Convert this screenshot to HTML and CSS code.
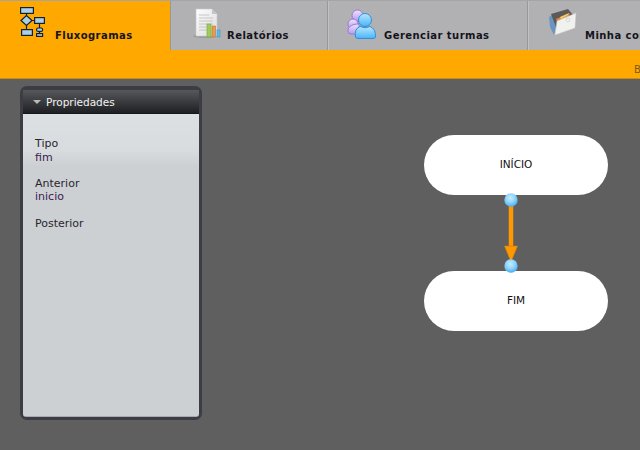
FILE: index.html
```html
<!DOCTYPE html>
<html lang="en">
<head>
  <meta charset="UTF-8">
  <title>Fluxogramas</title>
  <link rel="stylesheet" href="styles.css">
</head>
<body>
  <!-- Top menu -->
  <div class="tabs">
    <div class="tab active tab-flow">
      <svg class="icon" width="46" height="40" viewBox="0 0 46 40">
        <g stroke="#14202c" stroke-width="1.2" fill="#a9d0e6">
          <path d="M26.500 13V16M26.500 25V29M31 20.500H35M39.500 23V28M39.500 31V33" fill="none"/>
          <rect x="20.600" y="7.600" width="12.800" height="5.800"/>
          <path d="M21 20.500L26.500 15.500L32 20.500L26.500 25.500Z"/>
          <rect x="34.600" y="17.600" width="9.800" height="5.800"/>
          <rect x="21.600" y="29.600" width="10.800" height="5.800"/>
          <rect x="36.600" y="28" width="6" height="3.400" rx="1.500"/>
          <rect x="36.600" y="33.600" width="6" height="2.800"/>
        </g>
      </svg>
      <span class="tab-label">Fluxogramas</span>
    </div>
    <div class="tab tab-report">
      <svg class="icon" width="30" height="32" viewBox="0 0 30 32">
        <defs>
          <linearGradient id="sheet" x1="0" y1="0" x2="1" y2="1">
            <stop offset="0" stop-color="#fdfdfd"/>
            <stop offset="1" stop-color="#dcdcdc"/>
          </linearGradient>
        </defs>
        <ellipse cx="12" cy="28" rx="12" ry="2" fill="#8d8d8d" opacity=".6"/>
        <path d="M3 1H19L24 6V28H3Z" fill="url(#sheet)" stroke="#c9c9c9" stroke-width=".6"/>
        <path d="M19 1V6H24Z" fill="#c4c4c4"/>
        <path d="M6 7H16M6 10H20M6 13H20M6 16H20M6 19H15M6 22H15" stroke="#c6c6c6"/>
        <rect x="14" y="16" width="4" height="13" fill="#9fcf52" stroke="#7ea23e" stroke-width=".6"/>
        <rect x="19" y="18" width="3.600" height="11" fill="#e39b56" stroke="#b97b3f" stroke-width=".6"/>
        <rect x="24" y="22" width="3" height="7" fill="#5cbcee" stroke="#3f94c4" stroke-width=".6"/>
      </svg>
      <span class="tab-label">Relatórios</span>
    </div>
    <div class="tab tab-group">
      <svg class="icon" width="30" height="30" viewBox="0 0 30 30">
        <defs>
          <linearGradient id="violet" x1="0" y1="0" x2="0" y2="1">
            <stop offset="0" stop-color="#efe4fb"/>
            <stop offset="1" stop-color="#b79bec"/>
          </linearGradient>
          <linearGradient id="blue" x1="0" y1="0" x2="0" y2="1">
            <stop offset="0" stop-color="#b8e8ff"/>
            <stop offset="1" stop-color="#4ab4f6"/>
          </linearGradient>
        </defs>
        <g fill="url(#violet)" stroke="#9a78d8">
          <circle cx="10.500" cy="6.500" r="5.500"/>
          <circle cx="6" cy="15" r="5"/>
          <path d="M1 22C1 17 6 15 12 15V25H4Q1 25 1 22Z"/>
        </g>
        <g fill="url(#blue)" stroke="#2f8fdc">
          <circle cx="18" cy="11" r="6.500"/>
          <path d="M8.500 28Q7 20 13 17.500Q18 20 23 17.500Q29 20 28.500 28Q28 29.500 26 29.500H11Q9 29.500 8.500 28Z"/>
        </g>
      </svg>
      <span class="tab-label">Gerenciar turmas</span>
    </div>
    <div class="tab tab-folder">
      <svg class="icon" width="30" height="30" viewBox="0 0 30 30">
        <path d="M1 10L8 6L11 10L6 28L2 20Z" fill="#6a94c4"/>
        <path d="M3 7L20 2L25 8L8 20Z" fill="#5c5a58"/>
        <path d="M8 12L22 6L20 11L10 18Z" fill="#e8843a"/>
        <path d="M12 10L21 6L20 8L13 12Z" fill="#f0d060"/>
        <path d="M7 28L9 14L28 6L27 21Z" fill="#f1f2ef" stroke="#c4c4c0" stroke-width=".5"/>
        <circle cx="20" cy="13" r="2" fill="none" stroke="#cfe0cf"/>
      </svg>
      <span class="tab-label">Minha conta</span>
    </div>
  </div>
  <div class="subbar"><span class="subbar-text">Bem-vindo</span></div>

  <div class="main">
    <!-- Properties panel -->
    <div class="panel">
      <div class="panel-title"><span class="caret"></span>Propriedades</div>
      <div class="panel-body">
        <div class="prop"><div>Tipo</div><div class="value value-first">fim</div></div>
        <div class="prop"><div>Anterior</div><div class="value">inicio</div></div>
        <div class="prop"><div>Posterior</div></div>
      </div>
    </div>

    <!-- Flowchart canvas -->
    <div class="node node-start">INÍCIO</div>
    <div class="node node-end">FIM</div>
    <svg class="link" width="30" height="90" viewBox="0 0 30 90">
      <defs>
        <radialGradient id="ball" cx=".45" cy=".35" r=".7">
          <stop offset="0" stop-color="#c8ecff"/>
          <stop offset=".5" stop-color="#8ed4fb"/>
          <stop offset="1" stop-color="#3ba6f0"/>
        </radialGradient>
      </defs>
      <path d="M15 14V62" stroke="#ff9800" stroke-width="4.500"/>
      <path d="M8.500 56H21.500L15 72Z" fill="#ff9800" stroke="#c97e08" stroke-width=".6"/>
      <circle cx="15" cy="10" r="6.700" fill="url(#ball)"/>
      <circle cx="15" cy="76" r="6.700" fill="url(#ball)"/>
    </svg>
  </div>
</body>
</html>
```

FILE: styles.css
```css
* {
  margin: 0;
  padding: 0;
  box-sizing: border-box;
}

html, body {
  height: 100%;
  overflow: hidden;
}

body {
  width: 640px;
  background: #5f5f5f;
  font-family: "DejaVu Sans", Verdana, sans-serif;
  font-size: 11px;
}

/* Top menu */
.tabs {
  display: flex;
  height: 50px;
  background: #b1b1b3;
  border-top: 1px solid #a5a5a5;
  overflow: hidden;
}

.tab {
  position: relative;
  flex: none;
  height: 49px;
  border-right: 1px solid #98989a;
  box-shadow: 1px 0 0 #c0c0c2;
  display: flex;
  align-items: flex-end;
}

.tab.active {
  background: #ffa800;
  box-shadow: none;
}

.tab-flow { width: 171px; padding-left: 55px; }
.tab-report { width: 157px; padding-left: 56px; }
.tab-group { width: 200px; padding-left: 56px; }
.tab-folder { width: 112px; padding-left: 57px; border-right: none; box-shadow: none; }

.tab-label {
  font-weight: bold;
  font-size: 10px;
  letter-spacing: 0.45px;
  color: #14141c;
  line-height: 13px;
  padding-bottom: 8px;
  white-space: nowrap;
}

.icon {
  position: absolute;
}

.tab-flow .icon { left: 0; top: -1px; }
.tab-report .icon { left: 22px; top: 7px; }
.tab-group .icon { left: 19px; top: 8px; }
.tab-folder .icon { left: 20px; top: 6px; }

.subbar {
  height: 29px;
  background: #ffa800;
  border-bottom: 1px solid #c98d16;
  padding: 13px 0 0 634px;
  line-height: 13px;
  font-size: 10px;
  color: #7a5a1a;
  white-space: nowrap;
  overflow: hidden;
}

.main {
  position: relative;
  height: 371px;
  padding: 7px 0 0 20px;
}

/* Properties panel */
.panel {
  width: 182px;
  height: 334px;
  padding: 4px 3px 3px;
  background: #3b3c44;
  border-radius: 7px;
}

.panel-title {
  height: 24px;
  padding: 1px 0 0 10px;
  display: flex;
  align-items: center;
  gap: 5px;
  background: linear-gradient(#56585c, #1e1f23);
  border-bottom: 1px solid #16171a;
  color: #f2f2f2;
  font-size: 10.5px;
}

.caret {
  width: 0;
  height: 0;
  border-left: 4px solid transparent;
  border-right: 4px solid transparent;
  border-top: 4px solid #b9b9b9;
}

.panel-body {
  height: 303px;
  padding: 23px 12px 0;
  background: linear-gradient(#dde0e3 0, #d9dcdf 36px, #ccd0d3 52px, #ccd0d3 100%);
  border-bottom: 1px solid #a8a9ad;
  border-radius: 0 0 3px 3px;
  color: #2a2630;
  line-height: 13px;
}

.prop {
  margin-bottom: 14px;
}

.value {
  color: #3a1a52;
}

.value-first {
  margin: 1px 0 -1px;
}

/* Flowchart canvas */
.node {
  position: absolute;
  left: 424px;
  width: 184px;
  height: 60px;
  padding-bottom: 2px;
  border-radius: 30px;
  background: #fff;
  display: flex;
  align-items: center;
  justify-content: center;
  color: #111;
  font-size: 10.5px;
}

.node-start { top: 56px; }
.node-end { top: 192px; }

.link {
  position: absolute;
  left: 496px;
  top: 111px;
}
```
